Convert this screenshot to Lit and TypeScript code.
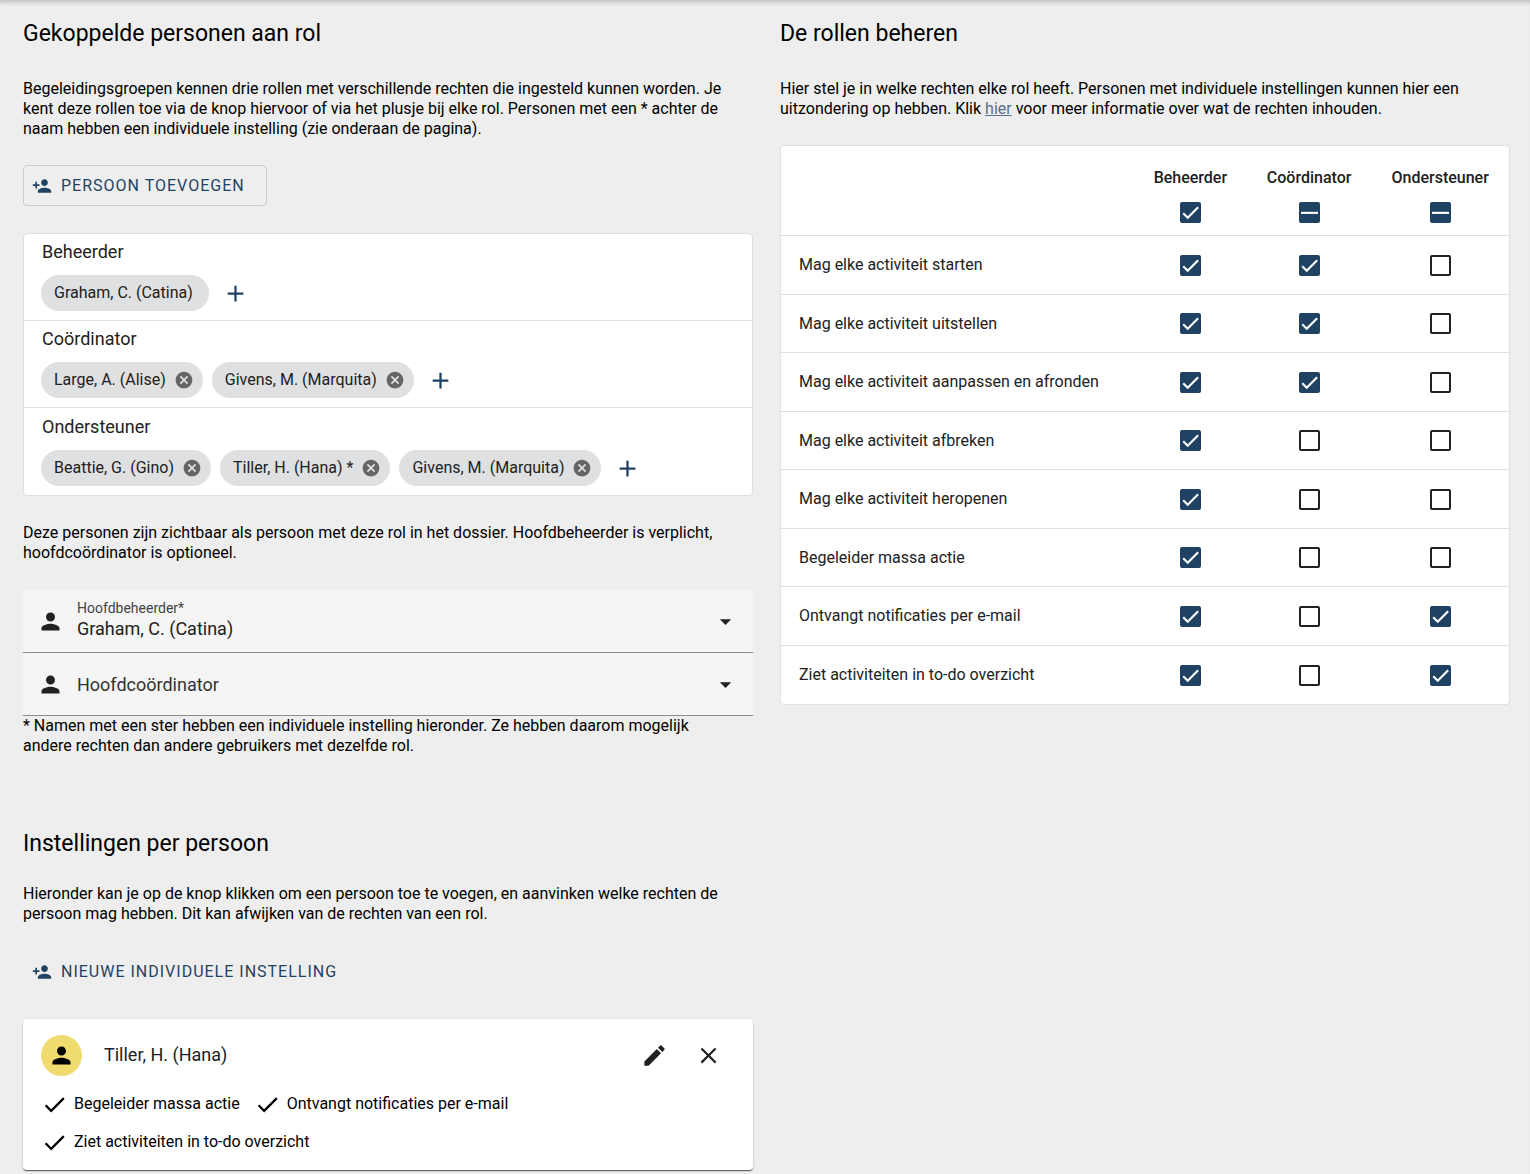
import { LitElement, html, css, svg, nothing } from "lit";
import { customElement } from "lit/decorators.js";

const ICONS = {
  personAdd:
    "M15 12c2.21 0 4-1.79 4-4s-1.79-4-4-4-4 1.79-4 4 1.79 4 4 4zm-9-2V7H4v3H1v2h3v3h2v-3h3v-2H6zm9 4c-2.67 0-8 1.34-8 4v2h16v-2c0-2.66-5.33-4-8-4z",
  person:
    "M12 12c2.21 0 4-1.79 4-4s-1.79-4-4-4-4 1.79-4 4 1.79 4 4 4zm0 2c-2.67 0-8 1.34-8 4v2h16v-2c0-2.66-5.33-4-8-4z",
  add: "M19 13h-6v6h-2v-6H5v-2h6V5h2v6h6v2z",
  cancel:
    "M12 2C6.47 2 2 6.47 2 12s4.47 10 10 10 10-4.47 10-10S17.53 2 12 2zm5 13.59L15.59 17 12 13.41 8.41 17 7 15.59 10.59 12 7 8.41 8.41 7 12 10.59 15.59 7 17 8.41 13.41 12 17 15.59z",
  arrow: "M7 10l5 5 5-5z",
  edit: "M3 17.25V21h3.75L17.81 9.94l-3.75-3.75L3 17.25zM20.71 7.04c.39-.39.39-1.02 0-1.41l-2.34-2.34c-.39-.39-1.02-.39-1.41 0l-1.83 1.83 3.75 3.75 1.83-1.83z",
  close:
    "M19 6.41L17.59 5 12 10.59 6.41 5 5 6.41 10.59 12 5 17.59 6.41 19 12 13.41 17.59 19 19 17.59 13.41 12z",
  check: "M9 16.17L4.83 12l-1.42 1.41L9 19 21 7l-1.41-1.41z",
};

const icon = (name: keyof typeof ICONS, cls = "icon") =>
  html`<svg class=${cls} viewBox="0 0 24 24" aria-hidden="true">${svg`<path d=${ICONS[name]} />`}</svg>`;

interface Person {
  name: string;
  removable: boolean;
}

const ROLES: { title: string; people: Person[] }[] = [
  { title: "Beheerder", people: [{ name: "Graham, C. (Catina)", removable: false }] },
  {
    title: "Coördinator",
    people: [
      { name: "Large, A. (Alise)", removable: true },
      { name: "Givens, M. (Marquita)", removable: true },
    ],
  },
  {
    title: "Ondersteuner",
    people: [
      { name: "Beattie, G. (Gino)", removable: true },
      { name: "Tiller, H. (Hana) *", removable: true },
      { name: "Givens, M. (Marquita)", removable: true },
    ],
  },
];

const RIGHTS: [string, boolean[]][] = [
  ["Mag elke activiteit starten", [true, true, false]],
  ["Mag elke activiteit uitstellen", [true, true, false]],
  ["Mag elke activiteit aanpassen en afronden", [true, true, false]],
  ["Mag elke activiteit afbreken", [true, false, false]],
  ["Mag elke activiteit heropenen", [true, false, false]],
  ["Begeleider massa actie", [true, false, false]],
  ["Ontvangt notificaties per e-mail", [true, false, true]],
  ["Ziet activiteiten in to-do overzicht", [true, false, true]],
];

const PERSONAL_RIGHTS = [
  "Begeleider massa actie",
  "Ontvangt notificaties per e-mail",
  "Ziet activiteiten in to-do overzicht",
];

@customElement("app-checkbox")
export class AppCheckbox extends LitElement {
  static properties = {
    checked: { type: Boolean },
    mixed: { type: Boolean },
    label: { type: String },
  };
  declare checked: boolean;
  declare mixed: boolean;
  declare label: string;

  constructor() {
    super();
    this.checked = false;
    this.mixed = false;
    this.label = "";
  }

  static styles = css`
    :host {
      display: inline-block;
      vertical-align: middle;
    }
    .box {
      display: grid;
      place-items: center;
      width: 21px;
      height: 21px;
    }
    .input,
    .mark {
      grid-area: 1 / 1;
    }
    .input {
      appearance: none;
      box-sizing: border-box;
      width: 21px;
      height: 21px;
      margin: 0;
      border: 2px solid #212121;
      border-radius: 2px;
      cursor: pointer;
    }
    .input:checked,
    .input:indeterminate {
      background: #1f4262;
      border-color: #1f4262;
    }
    .mark {
      width: 17px;
      height: 17px;
      fill: none;
      stroke: #fff;
      stroke-width: 3;
      pointer-events: none;
    }
  `;

  private onChange(e: Event) {
    this.checked = (e.target as HTMLInputElement).checked;
    this.mixed = false;
  }

  render() {
    const path = this.mixed ? "M0 12.5H24" : this.checked ? "M1.73 12.91L8.1 19.28L22.79 4.59" : "";
    return html`<span class="box">
      <input
        class="input"
        type="checkbox"
        aria-label=${this.label}
        .checked=${this.checked}
        .indeterminate=${this.mixed}
        @change=${this.onChange}
      />
      ${path
        ? html`<svg class="mark" viewBox="0 0 24 24" aria-hidden="true"><path d=${path} /></svg>`
        : nothing}
    </span>`;
  }
}

@customElement("app-root")
export class AppRoot extends LitElement {
  static styles = css`
    :host {
      display: block;
      min-height: 100vh;
      box-sizing: border-box;
      background: #eee;
      box-shadow: inset 0 6px 5px -4px rgba(0, 0, 0, 0.22);
      color: #000;
      font: 16px/20px Roboto, "Liberation Sans", sans-serif;
    }
    .page {
      display: grid;
      grid-template-columns: minmax(0, 1fr) minmax(0, 1fr);
      column-gap: 27px;
      align-items: start;
      padding: 14px 20px 4px 23px;
    }
    .heading {
      margin: 0 0 25px;
      font-size: 23px;
      line-height: 40px;
      font-weight: 400;
    }
    .compact {
      margin-bottom: 20px;
    }
    .text {
      margin: 0 0 26px;
    }
    .link {
      color: #5b6f86;
    }
    .icon {
      display: block;
      flex: none;
      width: 27px;
      height: 27px;
      fill: currentColor;
    }
    .icon-small {
      display: block;
      flex: none;
      width: 20px;
      height: 20px;
      fill: currentColor;
    }
    .button {
      display: flex;
      align-items: center;
      gap: 9px;
      height: 41px;
      padding: 0 21px 0 8px;
      border: 1px solid transparent;
      border-radius: 4px;
      background: none;
      color: #1f4262;
      font: inherit;
      letter-spacing: 1px;
      text-transform: uppercase;
      cursor: pointer;
    }
    .outlined {
      border-color: #ccc;
    }
    .plain {
      margin-top: 27px;
    }
    .panel {
      background: #fff;
      border: 1px solid #e0e0e0;
      border-radius: 4px;
      color: #212121;
    }
    .roles {
      margin: 27px 0;
    }
    .role {
      padding: 8px 17px 9px;
    }
    .role + .role {
      border-top: 1px solid #e0e0e0;
    }
    .role:last-child {
      padding-top: 9px;
    }
    .role-title {
      margin: 0 1px 13px;
      font-size: 18px;
      line-height: 20px;
      font-weight: 400;
    }
    .chips {
      display: flex;
      flex-wrap: wrap;
      align-items: center;
      gap: 9px;
    }
    .chip {
      display: flex;
      align-items: center;
      gap: 8px;
      height: 36px;
      box-sizing: border-box;
      padding: 0 16px 0 13px;
      border-radius: 18px;
      background: #dfe0e1;
    }
    .removable {
      padding-right: 9px;
    }
    .bare {
      display: grid;
      place-items: center;
      padding: 0;
      border: 0;
      background: none;
      color: inherit;
      cursor: pointer;
    }
    .remove {
      color: #656565;
    }
    .add {
      margin-left: 4px;
      color: #1f4262;
    }
    .fields {
      margin-top: 27px;
    }
    .field {
      position: relative;
      display: grid;
      align-items: center;
      height: 62px;
      border-bottom: 1px solid #8c8c8c;
      border-radius: 4px 4px 0 0;
      background: #f5f5f5;
      color: #212121;
    }
    .select {
      appearance: none;
      grid-area: 1 / 1;
      width: 100%;
      height: 100%;
      padding: 16px 54px 0 54px;
      border: 0;
      background: none;
      color: inherit;
      font: inherit;
      font-size: 18px;
    }
    .lead,
    .trail,
    .label {
      grid-area: 1 / 1;
      pointer-events: none;
    }
    .lead {
      justify-self: start;
      padding-left: 14px;
    }
    .trail {
      justify-self: end;
      padding-right: 14px;
    }
    .label {
      padding: 2px 0 0 54px;
      font-size: 18px;
      color: #333;
    }
    .floating {
      align-self: start;
      padding-top: 8px;
      font-size: 14px;
      color: #444;
    }
    .note {
      margin: 0 0 68px;
      padding-right: 27px;
    }
    .table {
      width: 100%;
      border-collapse: separate;
      border-spacing: 0;
    }
    .head-cell {
      height: 89px;
      box-sizing: border-box;
      padding: 9px 18px 0;
      font-weight: 500;
      text-align: center;
    }
    .head-stack {
      display: flex;
      flex-direction: column;
      align-items: center;
      gap: 14px;
    }
    .row-label,
    .cell {
      height: 58px;
      box-sizing: border-box;
      padding: 0 18px;
      border-top: 1px solid #e0e0e0;
      text-align: center;
    }
    .row:nth-child(odd) .row-label,
    .row:last-child .row-label {
      height: 59px;
    }
    .row-label {
      padding-right: 24px;
      font-weight: 400;
      text-align: left;
      white-space: nowrap;
    }
    .card {
      margin-top: 27px;
      padding: 9px 18px;
      border-radius: 4px;
      background: #fff;
      box-shadow:
        0 2px 1px -1px rgba(0, 0, 0, 0.4),
        0 1px 1px rgba(0, 0, 0, 0.3),
        0 1px 3px rgba(0, 0, 0, 0.14);
    }
    .card-head {
      display: flex;
      align-items: center;
      height: 54px;
    }
    .avatar {
      display: grid;
      place-items: center;
      width: 41px;
      height: 41px;
      border-radius: 50%;
      background: #f0db6f;
    }
    .name {
      flex: 1;
      margin: 0 22px;
      font-size: 18px;
      font-weight: 400;
      color: #212121;
    }
    .action {
      width: 54px;
      height: 54px;
      color: #212121;
    }
    .granted {
      display: flex;
      flex-wrap: wrap;
      column-gap: 14px;
      margin: 3px 0 0;
      padding: 0;
      list-style: none;
    }
    .grant {
      display: flex;
      align-items: center;
      gap: 6px;
      height: 38px;
    }
  `;

  private renderChip(p: Person) {
    return html`<div class="chip ${p.removable ? "removable" : ""}">
      <span>${p.name}</span>
      ${p.removable
        ? html`<button class="bare remove" type="button" aria-label="Verwijderen">
            ${icon("cancel", "icon-small")}
          </button>`
        : nothing}
    </div>`;
  }

  private renderRoles() {
    return html`<div class="panel roles">
      ${ROLES.map(
        (r) => html`<section class="role">
          <h3 class="role-title">${r.title}</h3>
          <div class="chips">
            ${r.people.map((p) => this.renderChip(p))}
            <button class="bare add" type="button" aria-label="Toevoegen">${icon("add")}</button>
          </div>
        </section>`,
      )}
    </div>`;
  }

  private renderTable() {
    return html`<div class="panel">
      <table class="table">
        <thead>
          <tr>
            <td class="head-cell"></td>
            ${ROLES.map(
              (r, i) => html`<th class="head-cell" scope="col">
                <div class="head-stack">
                  <span>${r.title}</span>
                  <app-checkbox ?checked=${i === 0} ?mixed=${i > 0} label=${r.title}></app-checkbox>
                </div>
              </th>`,
            )}
          </tr>
        </thead>
        <tbody>
          ${RIGHTS.map(
            ([name, values]) => html`<tr class="row">
              <th class="row-label" scope="row">${name}</th>
              ${values.map(
                (v, i) => html`<td class="cell">
                  <app-checkbox ?checked=${v} label="${name}, ${ROLES[i].title}"></app-checkbox>
                </td>`,
              )}
            </tr>`,
          )}
        </tbody>
      </table>
    </div>`;
  }

  render() {
    return html`<main class="page">
      <div>
        <h2 class="heading">Gekoppelde personen aan rol</h2>
        <p class="text">
          Begeleidingsgroepen kennen drie rollen met verschillende rechten die ingesteld kunnen
          worden. Je kent deze rollen toe via de knop hiervoor of via het plusje bij elke rol.
          Personen met een * achter de naam hebben een individuele instelling (zie onderaan de
          pagina).
        </p>
        <button class="button outlined" type="button">
          ${icon("personAdd", "icon-small")}<span>Persoon toevoegen</span>
        </button>
        ${this.renderRoles()}
        <p class="text">
          Deze personen zijn zichtbaar als persoon met deze rol in het dossier. Hoofdbeheerder is
          verplicht, hoofdcoördinator is optioneel.
        </p>
        <div class="fields">
          <div class="field">
            <select class="select" id="manager" required>
              <option selected>Graham, C. (Catina)</option>
            </select>
            <label class="label floating" for="manager">Hoofdbeheerder*</label>
            <span class="lead">${icon("person")}</span>
            <span class="trail">${icon("arrow")}</span>
          </div>
          <div class="field">
            <select class="select" id="coordinator">
              <option selected></option>
            </select>
            <label class="label" for="coordinator">Hoofdcoördinator</label>
            <span class="lead">${icon("person")}</span>
            <span class="trail">${icon("arrow")}</span>
          </div>
        </div>
        <p class="note">
          * Namen met een ster hebben een individuele instelling hieronder. Ze hebben daarom
          mogelijk andere rechten dan andere gebruikers met dezelfde rol.
        </p>
        <h2 class="heading compact">Instellingen per persoon</h2>
        <p class="text">
          Hieronder kan je op de knop klikken om een persoon toe te voegen, en aanvinken welke
          rechten de persoon mag hebben. Dit kan afwijken van de rechten van een rol.
        </p>
        <button class="button plain" type="button">
          ${icon("personAdd", "icon-small")}<span>Nieuwe individuele instelling</span>
        </button>
        <article class="card">
          <header class="card-head">
            <span class="avatar">${icon("person")}</span>
            <h3 class="name">Tiller, H. (Hana)</h3>
            <button class="bare action" type="button" aria-label="Bewerken">${icon("edit")}</button>
            <button class="bare action" type="button" aria-label="Verwijderen">${icon("close")}</button>
          </header>
          <ul class="granted">
            ${PERSONAL_RIGHTS.map(
              (r) => html`<li class="grant">${icon("check")}<span>${r}</span></li>`,
            )}
          </ul>
        </article>
      </div>
      <div>
        <h2 class="heading">De rollen beheren</h2>
        <p class="text">
          Hier stel je in welke rechten elke rol heeft. Personen met individuele instellingen kunnen
          hier een uitzondering op hebben. Klik <a class="link" href="#rechten">hier</a> voor meer
          informatie over wat de rechten inhouden.
        </p>
        ${this.renderTable()}
      </div>
    </main>`;
  }
}
